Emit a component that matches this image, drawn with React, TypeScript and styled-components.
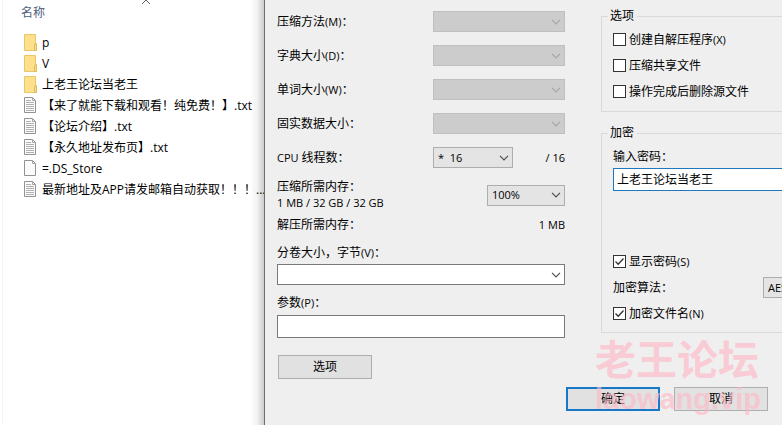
import React, { useState } from "react";
import styled, { createGlobalStyle } from "styled-components";

const GlobalStyle = createGlobalStyle`
  *, *::before, *::after { box-sizing: border-box; }
  body {
    margin: 0;
    background: #ffffff;
    color: #000000;
    font: 12px/16px "Open Sans", "Noto Sans CJK SC", sans-serif;
  }
  button, input, select { font: inherit; color: inherit; margin: 0; border-radius: 0; }
`;

const Desktop = styled.main`
  position: relative;
  display: grid;
  grid-template-columns: 264px minmax(0, 1fr);
  min-height: 100vh;
  overflow: hidden;
`;

const Explorer = styled.section`
  margin-left: 2px;
  border-left: 1px solid #f3f3f3;
  min-width: 0;
`;

const ColumnHeader = styled.header`
  position: relative;
  padding: 5px 0 0 18px;
  height: 32px;
  color: #4c607a;
`;

const SortMark = styled.svg`
  position: absolute;
  top: 0;
  left: 138px;
`;

const FileList = styled.ul`
  list-style: none;
  margin: 0;
  padding: 0 0 0 21px;
`;

const FileRow = styled.li`
  display: flex;
  align-items: center;
  gap: 5px;
  height: 21px;
  white-space: nowrap;
  svg { flex: none; }
`;

const Dialog = styled.form`
  display: flex;
  flex-direction: column;
  min-width: 0;
  overflow: hidden;
  background: #efefef;
  border-left: 1px solid #6c6c6c;
`;

const Shade = styled.div`
  position: absolute;
  top: 0;
  bottom: 0;
  left: 250px;
  width: 14px;
  background: linear-gradient(to right, rgba(0, 0, 0, 0), rgba(0, 0, 0, 0.05) 50%, rgba(0, 0, 0, 0.2));
`;

const Columns = styled.div`
  display: grid;
  grid-template-columns: 288px minmax(0, 1fr);
  gap: 36px;
  padding-left: 12px;
`;

const Settings = styled.div`
  display: flex;
  flex-direction: column;
  padding-top: 11px;
`;

const SettingRows = styled.div`
  display: flex;
  flex-direction: column;
  gap: 13px;
`;

const Row = styled.div`
  display: flex;
  align-items: center;
  height: 21px;
  white-space: nowrap;
`;

const RowLabel = styled.label`
  flex: none;
  width: 156px;
`;

const Latin = styled.span`
  font-size: 11px;
`;

const Trailing = styled(Latin)`
  margin-left: auto;
`;

const MemoryRow = styled.div`
  display: flex;
  justify-content: space-between;
  align-items: center;
  margin-top: 11px;
  height: 32px;
`;

const UnpackRow = styled.div`
  display: flex;
  justify-content: space-between;
  margin-top: 6px;
`;

const FieldLabel = styled.label`
  display: block;
  margin: 12px 0 3px;
`;

const ArgsLabel = styled(FieldLabel)`
  margin: 10px 0 4px;
`;

const SelectBox = styled.span<{ $width?: number }>`
  display: grid;
  flex: none;
  align-items: center;
  width: ${(p) => (p.$width ? `${p.$width}px` : "100%")};
  & > * { grid-area: 1 / 1; }
  & > svg { justify-self: end; margin-right: 4px; pointer-events: none; }
`;

const Select = styled.select`
  appearance: none;
  width: 100%;
  height: 21px;
  padding: 0 20px 0 4px;
  border: 1px solid #adadad;
  background: #e4e4e4;
  font-size: 11px;
  &:disabled {
    opacity: 1;
    background: #cccccc;
    border-color: #bfbfbf;
  }
`;

const TextBox = styled.input<{ $active?: boolean; $short?: boolean }>`
  display: block;
  width: 100%;
  height: ${(p) => (p.$short ? 21 : 23)}px;
  padding: 0 3px;
  background: #ffffff;
  border: 1px solid ${(p) => (p.$active ? "#1f78bd" : "#7a7a7a")};
  outline: none;
`;

const PasswordBox = styled(TextBox)`
  border-right: 0;
  padding: 0 3px 2px;
`;

const Button = styled.button<{ $primary?: boolean }>`
  width: 94px;
  height: 24px;
  padding: 0;
  background: #e1e1e1;
  border: ${(p) => (p.$primary ? "2px solid #1878c8" : "1px solid #adadad")};
`;

const OptionsButton = styled(Button)`
  margin: 17px 0 0 1px;
`;

const Groups = styled.div`
  display: flex;
  flex-direction: column;
  gap: 13px;
  min-width: 0;
  padding-top: 8px;
`;

const Group = styled.fieldset<{ $height: number }>`
  min-width: 0;
  min-height: ${(p) => p.$height}px;
  margin: 0;
  padding: 0 0 0 11px;
  border: 1px solid #dadada;
  border-right: 0;
`;

const Legend = styled.legend`
  margin-left: -5px;
  padding: 0 3px 0 2px;
`;

const CheckList = styled.div`
  display: flex;
  flex-direction: column;
  gap: 11px;
  padding-top: 8px;
`;

const CheckLabel = styled.label`
  display: flex;
  align-items: center;
  gap: 3px;
  height: 15px;
  line-height: 15px;
  white-space: nowrap;
`;

const CheckMark = styled.span`
  display: grid;
  width: 13px;
  height: 13px;
  & > * { grid-area: 1 / 1; }
  & > svg { pointer-events: none; }
`;

const CheckInput = styled.input`
  appearance: none;
  width: 13px;
  height: 13px;
  background: #ffffff;
  border: 1px solid #333333;
`;

const PasswordLabel = styled.label`
  display: block;
  margin: 8px 0 3px;
`;

const EncryptOptions = styled.div`
  display: flex;
  flex-direction: column;
  gap: 8px;
  margin-top: 63px;
`;

const AlgorithmLabel = styled.label`
  flex: none;
  width: 150px;
`;

const Footer = styled.footer`
  display: flex;
  justify-content: flex-end;
  gap: 14px;
  padding: 8px 14px 14px 0;
`;

const Watermark = styled.div`
  position: absolute;
  left: 595px;
  top: 334px;
  color: rgba(255, 184, 198, 0.65);
  font-weight: 700;
  pointer-events: none;
  white-space: nowrap;
`;

const WatermarkTitle = styled.div`
  font-family: "Noto Sans CJK SC", sans-serif;
  font-size: 41px;
  line-height: 46px;
`;

const WatermarkSite = styled.div`
  font-family: "Liberation Sans", sans-serif;
  font-size: 29px;
  line-height: 38px;
`;

const FolderIcon = () => (
  <svg width="13" height="17" viewBox="0 0 13 17" aria-hidden="true">
    <path d="M.5 .5h11v10h1v6H.5z" fill="#fce08c" stroke="#e8c766" />
    <path d="M10.5 16.5v-6l2-1v7z" fill="#f8dc80" stroke="#dfbd5c" />
  </svg>
);

const PageIcon = ({ lines }: { lines: boolean }) => (
  <svg width="13" height="17" viewBox="0 0 13 17" aria-hidden="true">
    <path d="M.5 .5h8l3 3v12H.5z" fill="#fbfbfb" stroke="#929292" />
    <path d="M8.5 .5v3h3" fill="none" stroke="#a4a4a4" />
    {lines && <path d="M2 3.5h5M2 5.5h8M2 7.5h8M2 9.5h8M2 11.5h8M2 13.5h8" stroke="#b0b0b0" />}
  </svg>
);

const Chevron = ({ color = "#505050" }: { color?: string }) => (
  <svg width="10" height="6" viewBox="0 0 10 6" aria-hidden="true">
    <path d="M1 .8l4 4 4-4" fill="none" stroke={color} strokeWidth="1.2" />
  </svg>
);

/* Latin runs are set one size below the Chinese text around them. */
function Mixed({ text }: { text: string }) {
  return (
    <span>
      {text.split(/([\x20-\x7e]+)/).map((run, i) => (i % 2 ? <Latin key={i}>{run}</Latin> : run))}
    </span>
  );
}

function Dropdown({ id, width, options, disabled }: {
  id: string; width: number; options: string[]; disabled?: boolean;
}) {
  return (
    <SelectBox $width={width}>
      <Select id={id} disabled={disabled}>
        {options.map((o) => <option key={o}>{o}</option>)}
      </Select>
      <Chevron color={disabled ? "#a6a6a6" : undefined} />
    </SelectBox>
  );
}

function Check({ text, initial = false }: { text: string; initial?: boolean }) {
  const [on, setOn] = useState(initial);
  return (
    <CheckLabel>
      <CheckMark>
        <CheckInput type="checkbox" checked={on} onChange={() => setOn(!on)} />
        {on && (
          <svg width="13" height="13" viewBox="0 0 13 13" aria-hidden="true">
            <path d="M2.5 6.5l2.7 2.7 5.3-5.7" fill="none" stroke="#333333" strokeWidth="1.3" />
          </svg>
        )}
      </CheckMark>
      <Mixed text={text} />
    </CheckLabel>
  );
}

type FileEntry = { name: string; kind: "folder" | "text" | "blank" };

const files: FileEntry[] = [
  { name: "p", kind: "folder" },
  { name: "V", kind: "folder" },
  { name: "上老王论坛当老王", kind: "folder" },
  { name: "【来了就能下载和观看！纯免费！】.txt", kind: "text" },
  { name: "【论坛介绍】.txt", kind: "text" },
  { name: "【永久地址发布页】.txt", kind: "text" },
  { name: "=.DS_Store", kind: "blank" },
  { name: "最新地址及APP请发邮箱自动获取！！！...", kind: "text" },
];

const emptySettings = [
  { id: "method", label: "压缩方法(M)：" },
  { id: "dictionary", label: "字典大小(D)：" },
  { id: "word", label: "单词大小(W)：" },
  { id: "solid", label: "固实数据大小：" },
];

export default function App() {
  const [password, setPassword] = useState("上老王论坛当老王");
  return (
    <>
      <GlobalStyle />
      <Desktop>
        <Explorer>
          <ColumnHeader>
            名称
            <SortMark width="10" height="5" viewBox="0 0 10 5" aria-hidden="true">
              <path d="M1 4l4-4 4 4" fill="none" stroke="#666666" />
            </SortMark>
          </ColumnHeader>
          <FileList>
            {files.map((f) => (
              <FileRow key={f.name}>
                {f.kind === "folder" ? <FolderIcon /> : <PageIcon lines={f.kind === "text"} />}
                {f.name}
              </FileRow>
            ))}
          </FileList>
        </Explorer>
        <Shade />
        <Dialog onSubmit={(e) => e.preventDefault()}>
          <Columns>
            <Settings>
              <SettingRows>
                {emptySettings.map((s) => (
                  <Row key={s.id}>
                    <RowLabel htmlFor={s.id}><Mixed text={s.label} /></RowLabel>
                    <Dropdown id={s.id} width={132} options={[""]} disabled />
                  </Row>
                ))}
                <Row>
                  <RowLabel htmlFor="threads"><Mixed text="CPU 线程数：" /></RowLabel>
                  <Dropdown id="threads" width={80} options={["*\u00a0\u00a016"]} />
                  <Trailing>/ 16</Trailing>
                </Row>
              </SettingRows>
              <MemoryRow>
                <label htmlFor="memory">
                  压缩所需内存：
                  <br />
                  <Latin>1 MB / 32 GB / 32 GB</Latin>
                </label>
                <Dropdown id="memory" width={78} options={["100%"]} />
              </MemoryRow>
              <UnpackRow>
                <span>解压所需内存：</span>
                <Latin>1 MB</Latin>
              </UnpackRow>
              <FieldLabel htmlFor="volume"><Mixed text="分卷大小，字节(V)：" /></FieldLabel>
              <SelectBox>
                <TextBox id="volume" type="text" $short />
                <Chevron />
              </SelectBox>
              <ArgsLabel htmlFor="args"><Mixed text="参数(P)：" /></ArgsLabel>
              <TextBox id="args" type="text" />
              <OptionsButton type="button">选项</OptionsButton>
            </Settings>
            <Groups>
              <Group $height={104}>
                <Legend>选项</Legend>
                <CheckList>
                  <Check text="创建自解压程序(X)" />
                  <Check text="压缩共享文件" />
                  <Check text="操作完成后删除源文件" />
                </CheckList>
              </Group>
              <Group $height={208}>
                <Legend>加密</Legend>
                <PasswordLabel htmlFor="password">输入密码：</PasswordLabel>
                <PasswordBox
                  id="password"
                  type="text"
                  $active
                  value={password}
                  onChange={(e) => setPassword(e.target.value)}
                />
                <EncryptOptions>
                  <Check text="显示密码(S)" initial />
                  <Row>
                    <AlgorithmLabel htmlFor="algorithm">加密算法：</AlgorithmLabel>
                    <Dropdown id="algorithm" width={90} options={["AES-256"]} />
                  </Row>
                  <Check text="加密文件名(N)" initial />
                </EncryptOptions>
              </Group>
            </Groups>
          </Columns>
          <Footer>
            <Button type="submit" $primary>确定</Button>
            <Button type="button">取消</Button>
          </Footer>
        </Dialog>
        <Watermark aria-hidden="true">
          <WatermarkTitle>老王论坛</WatermarkTitle>
          <WatermarkSite>laowang.vip</WatermarkSite>
        </Watermark>
      </Desktop>
    </>
  );
}
